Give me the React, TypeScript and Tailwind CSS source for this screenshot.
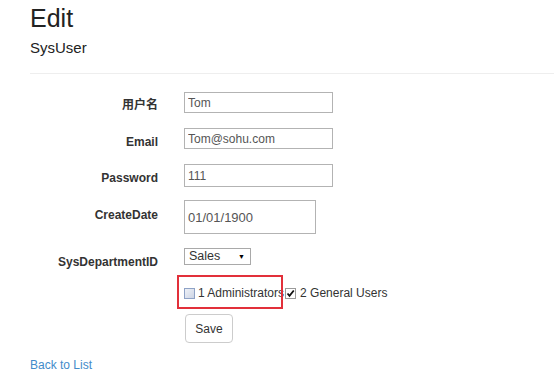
import React from "react";

const labelCls =
  "w-[128px] shrink-0 text-right text-[12px] font-bold leading-[16px] text-[#333]";
const inputCls =
  "ml-[26px] border border-[#b3b3b3] bg-white pl-[3px] text-[#555] outline-none font-['Liberation_Sans',Arial,sans-serif]";

export default function App() {
  return (
    <div className="w-[554px] h-[376px] overflow-hidden bg-white pl-[30px] font-['Liberation_Sans',Arial,'Noto_Sans_CJK_SC',sans-serif] text-[#333]">
      <h1 className="pt-[3px] text-[25px] leading-[30px] text-[#222]">Edit</h1>
      <h2 className="mt-[5px] text-[15px] leading-[20px] text-[#222]">SysUser</h2>
      <div className="mt-[15px] h-px bg-[#eee]" />

      <form className="mt-[18px] flex flex-col">
        <div className="flex items-start">
          <label className={`${labelCls} pt-[5px]`}>用户名</label>
          <input className={`${inputCls} text-[12px] w-[149px] h-[21px]`} defaultValue="Tom" />
        </div>
        <div className="mt-[15px] flex items-start">
          <label className={`${labelCls} pt-[6px]`}>Email</label>
          <input className={`${inputCls} text-[12px] w-[149px] h-[21px]`} defaultValue="Tom@sohu.com" />
        </div>
        <div className="mt-[14px] flex items-start">
          <label className={`${labelCls} pt-[6px]`}>Password</label>
          <input className={`${inputCls} text-[12px] w-[149px] h-[23px]`} defaultValue="111" />
        </div>
        <div className="mt-[13px] flex items-start">
          <label className={`${labelCls} pt-[7px]`}>CreateDate</label>
          <input className={`${inputCls} text-[13px] w-[132px] h-[34px]`} defaultValue="01/01/1900" />
        </div>
        <div className="mt-[14px] flex items-start">
          <label className={`${labelCls} pt-[6px]`}>SysDepartmentID</label>
          <div className="ml-[26px] flex h-[17px] w-[67px] items-center justify-between border border-[#a9a9a9] bg-white pl-[4px] pr-[5px] text-[12.5px] leading-none text-[#333]">
            <span>Sales</span>
            <span className="text-[7px] text-black">▼</span>
          </div>
        </div>

        <div className="mt-[15px] ml-[154px] relative flex h-[16px] items-center text-[12px] text-[#333]">
          <span className="inline-block h-[11px] w-[11px] border border-[#8ea2c6] bg-gradient-to-br from-[#eef1f7] to-[#cdd5e5]" />
          <span className="ml-[3px] leading-[16px]">1 Administrators</span>
          <span className="ml-[1px] inline-flex h-[11px] w-[11px] items-center justify-center border border-[#9a9a9a] bg-white">
            <svg width="9" height="9" viewBox="0 0 9 9">
              <path d="M1.5 4.5 L3.5 6.8 L7.8 1.5" fill="none" stroke="#111" strokeWidth="1.8" />
            </svg>
          </span>
          <span className="ml-[4px] leading-[16px]">2 General Users</span>
          <div className="pointer-events-none absolute left-[-7px] top-[-10px] h-[34px] w-[106px] border-2 border-[#e2303a]" />
        </div>

        <div className="mt-[13px] ml-[155px]">
          <button
            type="button"
            className="h-[29px] w-[48px] rounded-[4px] border border-[#ccc] bg-white text-[12px] text-[#333]"
          >
            Save
          </button>
        </div>
      </form>

      <div className="mt-[14px] text-[12px] leading-[16px]">
        <a className="text-[#428bca]" href="#">Back to List</a>
      </div>
    </div>
  );
}
